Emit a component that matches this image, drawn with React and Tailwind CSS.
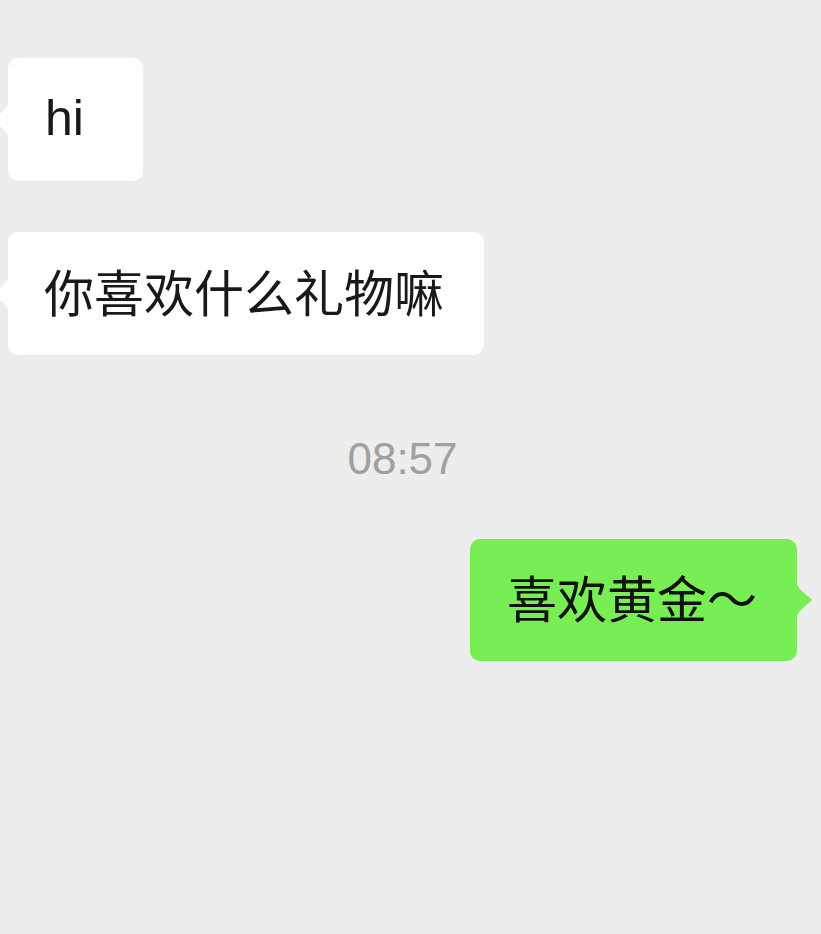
import React from 'react';

const font = { fontFamily: '"Noto Sans CJK SC", "Noto Sans", sans-serif' };

const Tail = ({ side, color }) => (
  <svg
    width="16"
    height="30"
    viewBox="0 0 16 30"
    className={side === 'left' ? 'absolute top-1/2 -translate-y-1/2 -left-[16px] -scale-x-100' : 'absolute top-1/2 -translate-y-1/2 -right-[16px]'}
  >
    <path d="M0 0 C4 6 9 10 13 13 Q16 15 13 17 C9 20 4 24 0 30 Z" fill={color} />
  </svg>
);

const Incoming = ({ children, className = '', style = font }) => (
  <div className="pl-2">
    <div
      className={`relative inline-flex h-[123px] items-center rounded-[10px] bg-white text-[50px] leading-[60px] text-[#191919] ${className}`}
      style={style}
    >
      <Tail side="left" color="#ffffff" />
      {children}
    </div>
  </div>
);

const App = () => {
  return (
    <div className="min-h-[934px] w-full bg-[#ededed] pt-[58px]">
      <Incoming
        className="w-[135px] pl-[37px] pb-1"
        style={{ fontFamily: '"Liberation Sans", Arial, sans-serif' }}
      >
        hi
      </Incoming>

      <div className="mt-[51px]">
        <Incoming className="pl-[36px] pr-[40px] pb-2">你喜欢什么礼物嘛</Incoming>
      </div>

      <div
        className="mt-[79px] pr-4 text-center text-[44px] leading-[50px] text-[#a0a0a0]"
        style={{ fontFamily: '"Liberation Sans", Arial, sans-serif' }}
      >
        08:57
      </div>

      <div className="mt-[55px] flex justify-end pr-[24px]">
        <div
          className="relative inline-flex h-[122px] items-center rounded-[10px] bg-[#78ee55] pl-[37px] pr-[40px] pb-2 text-[50px] leading-[60px] text-[#111111]"
          style={font}
        >
          喜欢黄金～
          <Tail side="right" color="#78ee55" />
        </div>
      </div>
    </div>
  );
};

export default App;
